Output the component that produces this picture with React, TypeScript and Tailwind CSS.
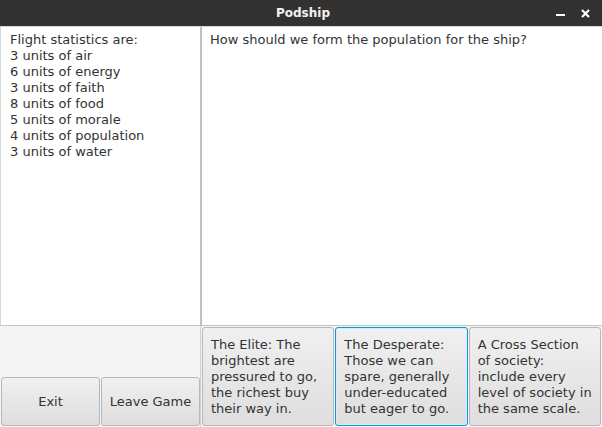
import React from 'react';

const stats = [
    'Flight statistics are:',
    '3 units of air',
    '6 units of energy',
    '3 units of faith',
    '8 units of food',
    '5 units of morale',
    '4 units of population',
    '3 units of water',
];

const choices = [
    { text: 'The Elite: The brightest are pressured to go, the richest buy their way in.', focused: false },
    { text: 'The Desperate: Those we can spare, generally under-educated but eager to go.', focused: true },
    { text: 'A Cross Section of society: include every level of society in the same scale.', focused: false },
];

function FxButton({
    children,
    focused,
    className,
}: {
    children: React.ReactNode;
    focused?: boolean;
    className?: string;
}) {
    return (
        <button
            className={`rounded-[3px] border bg-gradient-to-b from-[#f0f0f0] to-[#dedede] text-[#333333] ${
                focused ? 'border-[#0b9ad6] shadow-[inset_0_0_0_1px_#d4edf8]' : 'border-[#b8b8b8]'
            } ${className || ''}`}
        >
            {children}
        </button>
    );
}

export default function App() {
    return (
        <div
            className="w-[602px] h-[427px] flex flex-col bg-[#f4f4f4] text-[13px] leading-[16px] text-[#333333] overflow-hidden"
            style={{ fontFamily: '"DejaVu Sans", sans-serif' }}
        >
            {/* title bar */}
            <div className="h-[26px] bg-[#323232] flex items-center relative shrink-0">
                <div className="flex-1 text-center text-[#f2f2f2] font-bold text-[12px] pl-[4px]">Podship</div>
                <div className="absolute right-[12px] top-0 h-full flex items-center gap-[16px]">
                    <svg width="9" height="10" viewBox="0 0 9 10">
                        <rect x="0" y="6" width="9" height="2" fill="#ffffff" />
                    </svg>
                    <svg width="9" height="9" viewBox="0 0 9 9">
                        <path d="M1 1 L8 8 M8 1 L1 8" stroke="#ffffff" strokeWidth="2.2" />
                    </svg>
                </div>
            </div>

            {/* text areas */}
            <div className="flex flex-1 border-t border-[#d6d6d6]">
                <div className="w-[201px] bg-white border-r border-[#c4c4c4] border-l border-l-[#d8d8d8] pl-[9px] pt-[5px]">
                    {stats.map((s) => (
                        <div key={s}>{s}</div>
                    ))}
                </div>
                <div className="flex-1 bg-white border-l border-[#bdbdbd] pl-[8px] pt-[5px]">
                    How should we form the population for the ship?
                </div>
            </div>

            {/* bottom controls */}
            <div className="h-[102px] flex border-t border-[#c4c4c4] shrink-0">
                <div className="w-[201px] flex items-end gap-[1px] pl-[1px] pb-[1px] border-r border-[#d0d0d0]">
                    <FxButton className="w-[99px] h-[49px]">Exit</FxButton>
                    <FxButton className="w-[99px] h-[49px]">Leave Game</FxButton>
                </div>
                <div className="flex-1 flex gap-[1px] pt-[1px] pl-[1px] pb-[1px] pr-[1px]">
                    {choices.map((c) => (
                        <FxButton
                            key={c.text}
                            focused={c.focused}
                            className="flex-1 h-[99px] text-left pl-[8px] pr-[6px]"
                        >
                            {c.text}
                        </FxButton>
                    ))}
                </div>
            </div>
        </div>
    );
}
